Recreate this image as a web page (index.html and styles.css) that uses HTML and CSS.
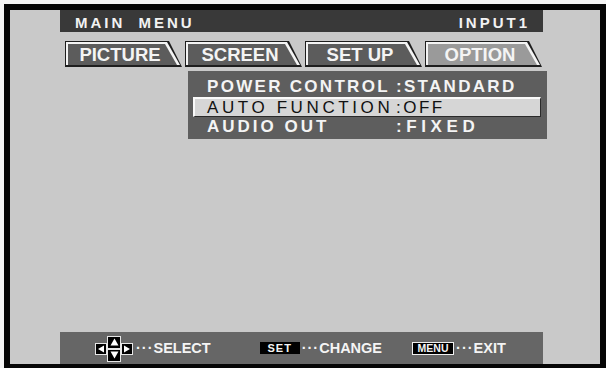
FILE: index.html
```html
<!DOCTYPE html>
<html>
<head>
<meta charset="utf-8">
<link rel="stylesheet" href="styles.css">
</head>
<body>
<div class="screen">
  <div class="content">
    <div class="header">
      <span class="title">MAIN MENU</span>
      <span class="title">INPUT1</span>
    </div>
    <div class="tabs">
      <div class="tab"><div class="tab-edge"><div class="tab-face">PICTURE</div></div></div>
      <div class="tab"><div class="tab-edge"><div class="tab-face">SCREEN</div></div></div>
      <div class="tab"><div class="tab-edge"><div class="tab-face">SET UP</div></div></div>
      <div class="tab active"><div class="tab-edge"><div class="tab-face">OPTION</div></div></div>
    </div>
    <div class="panel">
      <div class="row"><span class="label ls-power">POWER CONTROL</span><span class="value ls-std">:STANDARD</span></div>
      <div class="row selected"><span class="label ls-auto">AUTO FUNCTION</span><span class="value ls-off">:OFF</span></div>
      <div class="row"><span class="label ls-audio">AUDIO OUT</span><span class="value ls-fixed">:FIXED</span></div>
    </div>
    <div class="guide">
      <div class="g">
        <div class="dpad">
          <span class="key k-left"><svg width="8" height="8" viewBox="0 0 8 8"><polygon points="1,4 7,0.5 7,7.5" fill="#fff"/></svg></span>
          <span class="key k-up"><svg width="9" height="8" viewBox="0 0 9 8"><polygon points="4.5,0.5 8.5,7.5 0.5,7.5" fill="#fff"/></svg></span>
          <span class="key k-right"><svg width="8" height="8" viewBox="0 0 8 8"><polygon points="7,4 1,0.5 1,7.5" fill="#fff"/></svg></span>
          <span class="key k-down"><svg width="9" height="8" viewBox="0 0 9 8"><polygon points="4.5,7.5 8.5,0.5 0.5,0.5" fill="#fff"/></svg></span>
        </div>
        <span class="dots">···</span><span class="gtext">SELECT</span>
      </div>
      <div class="g g-set">
        <span class="kbtn k-set">SET</span><span class="dots">···</span><span class="gtext">CHANGE</span>
      </div>
      <div class="g g-menu">
        <span class="kbtn k-menu">MENU</span><span class="dots">···</span><span class="gtext">EXIT</span>
      </div>
    </div>
  </div>
</div>
</body>
</html>
```
FILE: styles.css
```css
html, body {
  margin: 0;
  padding: 0;
  background: #f4f4f4;
  overflow: hidden;
  font-family: "Liberation Sans", Arial, sans-serif;
}
.screen {
  width: 590px;
  height: 354px;
  margin: 4px 0 0 4px;
  border: 6px solid #050505;
  border-bottom-width: 4px;
  background: #c9c9c9;
}
.content {
  width: 483px;
  height: 354px;
  margin-left: 50px;
  display: flex;
  flex-direction: column;
}
.header {
  height: 22px;
  box-sizing: border-box;
  background: #393939;
  display: flex;
  justify-content: space-between;
  padding: 5px 13px 0 15px;
}
.title {
  color: #f2f2f2;
  font-weight: bold;
  font-size: 15px;
  line-height: 15px;
  letter-spacing: 3px;
  word-spacing: 6px;
}
.tabs {
  display: flex;
  gap: 3px;
  margin-top: 9px;
  padding-left: 5px;
  height: 26px;
}
.tab {
  width: 117px;
  height: 26px;
  box-sizing: border-box;
  padding: 1px 0 2px 1px;
  background: #1e1e1e;
  clip-path: polygon(0 0, calc(100% - 13px) 0, 100% 100%, 0 100%);
}
.tab-edge {
  height: 100%;
  box-sizing: border-box;
  padding: 2px 0 0 2px;
  background: #f4f4f4;
  clip-path: polygon(0 0, calc(100% - 15px) 0, calc(100% - 2px) 100%, 0 100%);
}
.tab-face {
  height: 100%;
  background: #5c5c5c;
  clip-path: polygon(0 0, calc(100% - 17px) 0, calc(100% - 5px) 100%, 0 100%);
  display: flex;
  align-items: center;
  justify-content: center;
  padding-right: 10px;
  box-sizing: border-box;
  color: #f4f4f4;
  font-weight: bold;
  font-size: 18.5px;
  line-height: 20px;
}
.tab.active .tab-face {
  background: #9a9a9a;
}
.panel {
  margin: 4px 0 0 128px;
  width: 359px;
  height: 68px;
  box-sizing: border-box;
  background: #5e5e5e;
  padding: 6px 6px 0 5px;
}
.row {
  height: 20px;
  box-sizing: border-box;
  padding-left: 14px;
  display: flex;
  align-items: center;
  color: #f4f4f4;
  font-weight: bold;
  font-size: 17px;
  line-height: 20px;
  white-space: pre;
}
.row.selected {
  background: #d6d6d6;
  color: #111;
  font-weight: normal;
  border-top: 2px solid #fafafa;
  border-left: 2px solid #fafafa;
  border-right: 1px solid #2a2a2a;
  border-bottom: 1px solid #2a2a2a;
  padding-left: 12px;
}
.label {
  display: inline-block;
  width: 189px;
}
.ls-power { letter-spacing: 2.3px; }
.ls-std { letter-spacing: 2.3px; }
.ls-auto { letter-spacing: 3.6px; }
.ls-off { letter-spacing: 2.5px; }
.ls-audio { letter-spacing: 3px; }
.ls-fixed { letter-spacing: 4.6px; }
.guide {
  margin-top: auto;
  height: 32px;
  background: #666666;
  display: flex;
  align-items: center;
  padding-left: 35px;
  color: #f4f4f4;
  font-weight: bold;
  font-size: 14.5px;
}
.g {
  display: flex;
  align-items: center;
}
.g-set { margin-left: 49px; }
.g-menu { margin-left: 30px; }
.dpad {
  display: grid;
  grid-template-columns: 12px 14px 12px;
  grid-template-rows: 13px 13px;
  margin-top: 1px;
}
.key {
  background: #000;
  box-sizing: border-box;
  border: 1px solid #e6e6e6;
  display: flex;
  align-items: center;
  justify-content: center;
}
.k-left { grid-column: 1; grid-row: 1 / 3; align-self: center; height: 12px; }
.k-up { grid-column: 2; grid-row: 1; }
.k-down { grid-column: 2; grid-row: 2; }
.k-right { grid-column: 3; grid-row: 1 / 3; align-self: center; height: 12px; }
.dots {
  margin-left: 3px;
  letter-spacing: 1px;
}
.gtext {
  letter-spacing: 0;
}
.kbtn {
  background: #000;
  color: #f4f4f4;
  font-size: 11px;
  line-height: 11px;
  font-weight: bold;
  display: flex;
  align-items: center;
  justify-content: center;
  box-sizing: border-box;
}
.k-set {
  width: 40px;
  height: 12px;
  letter-spacing: 1px;
}
.k-menu {
  width: 42px;
  height: 13px;
  border: 1px solid #f0f0f0;
  font-size: 10.5px;
}
.g-set .dots { margin-left: 2px; }
.g-menu .dots { margin-left: 2px; }
```
